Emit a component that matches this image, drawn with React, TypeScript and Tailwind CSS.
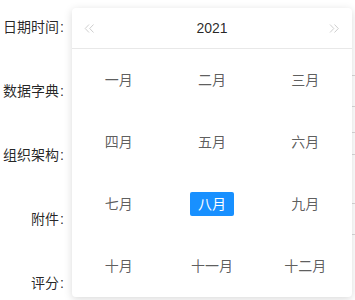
import React from "react";

const months = [
  "一月", "二月", "三月",
  "四月", "五月", "六月",
  "七月", "八月", "九月",
  "十月", "十一月", "十二月",
];

function DoubleChevron({ dir }: { dir: "left" | "right" }) {
  const d =
    dir === "left"
      ? ["M5 0.5 L1.2 4.5 L5 8.5", "M9.5 0.5 L5.7 4.5 L9.5 8.5"]
      : ["M1 0.5 L4.8 4.5 L1 8.5", "M5.5 0.5 L9.3 4.5 L5.5 8.5"];
  return (
    <svg width="11" height="9" viewBox="0 0 11 9" fill="none">
      {d.map((p, i) => (
        <path key={i} d={p} stroke="#cfcfcf" strokeWidth="1" />
      ))}
    </svg>
  );
}

function Row({ label, children }: { label: string; children?: React.ReactNode }) {
  return (
    <div className="flex h-8 items-center">
      <div className="w-[66px] shrink-0 pr-[2px] text-right text-[14px] text-[rgba(0,0,0,0.85)]">
        {label}
        <span className="ml-[1px]">:</span>
      </div>
      <div className="relative ml-[6px] h-full flex-1">{children}</div>
    </div>
  );
}

export default function App() {
  return (
    <div
      className="relative h-[300px] w-[355px] overflow-hidden bg-white"
      style={{ fontFamily: '"Liberation Sans", "Noto Sans CJK SC", sans-serif' }}
    >
      <div className="flex flex-col gap-8 pt-[11px]">
        <Row label="日期时间" />
        <Row label="数据字典">
          <div className="h-[32px] w-[320px] rounded-[2px] border border-[#d9d9d9]" />
        </Row>
        <Row label="组织架构">
          <div className="mt-[-7px] h-[23px] w-[320px] border-y border-[#d9d9d9]" />
        </Row>
        <Row label="附件">
          <div className="h-[32px] w-[320px] rounded-[2px] border border-[#d9d9d9]" />
        </Row>
        <Row label="评分" />
      </div>

      <div className="absolute left-[72px] top-[8px] flex h-[289px] w-[280px] flex-col rounded-[4px] bg-white shadow-[0_2px_8px_rgba(0,0,0,0.15)]">
        <div className="flex h-[41px] shrink-0 items-center justify-between border-b border-[#e8e8e8] px-[10px]">
          <span className="flex w-[14px] items-center justify-center pt-[1px] pl-[1px]">
            <DoubleChevron dir="left" />
          </span>
          <span className="text-[14px] text-[rgba(0,0,0,0.85)]">2021</span>
          <span className="flex w-[14px] items-center justify-center pt-[1px] pr-[1px]">
            <DoubleChevron dir="right" />
          </span>
        </div>
        <div className="grid flex-1 grid-cols-3 grid-rows-4">
          {months.map((m) => (
            <div key={m} className="flex items-center justify-center">
              <span
                className={
                  m === "八月"
                    ? "flex h-[24px] min-w-[44px] items-center justify-center rounded-[2px] bg-[#1890ff] px-[8px] text-[14px] text-white"
                    : "flex h-[24px] items-center justify-center px-[8px] text-[14px] text-[rgba(0,0,0,0.65)]"
                }
              >
                {m}
              </span>
            </div>
          ))}
        </div>
      </div>
    </div>
  );
}
